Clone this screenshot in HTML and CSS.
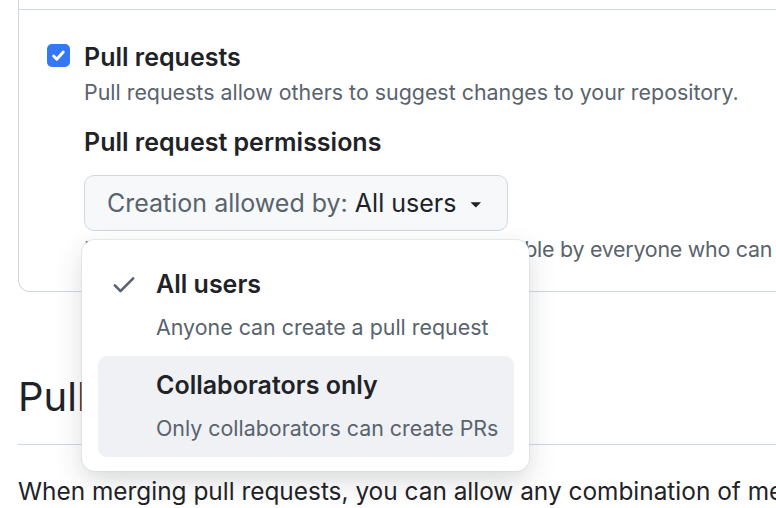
FILE: index.html
```html
<!DOCTYPE html>
<html lang="en">

<head>
    <meta charset="UTF-8">
    <meta name="viewport" content="width=device-width, initial-scale=1.0">
    <title>Settings · General</title>
    <link rel="stylesheet" href="styles.css">
</head>

<body>
    <div class="page">
        <div class="settings-box">
            <div class="settings-row">
                <!-- Checkbox ligado -->
                <span class="checkbox">
                    <svg viewBox="0 0 16 16" width="17" height="17" aria-hidden="true">
                        <path d="M3.4 8.5l3 3 6.1-6.8" fill="none" stroke="#fff" stroke-width="2.7" stroke-linecap="round" stroke-linejoin="round" />
                    </svg>
                </span>
                <div class="row-body">
                    <div class="row-label">Pull requests</div>
                    <p class="note">Pull requests allow others to suggest changes to your repository.</p>
                    <div class="sub-label">Pull request permissions</div>

                    <div class="menu-anchor">
                        <button type="button" class="select-button">
                            <span class="select-prefix">Creation allowed by:</span>
                            <span class="select-value">All users</span>
                            <svg class="caret" viewBox="0 0 16 16" width="25" height="25" aria-hidden="true">
                                <path d="m4.427 7.427 3.396 3.396a.25.25 0 0 0 .354 0l3.396-3.396A.25.25 0 0 0 11.396 7H4.604a.25.25 0 0 0-.177.427Z" />
                            </svg>
                        </button>
                        <p class="note note-tight">Keep in mind that pull requests remain viewable by everyone who can see this repository.</p>

                        <!-- Menu aberto -->
                        <ul class="select-menu">
                            <li class="menu-item">
                                <svg class="menu-check" viewBox="0 0 16 16" width="28" height="28" aria-hidden="true">
                                    <path d="M13.78 4.22a.75.75 0 0 1 0 1.06l-7.25 7.25a.75.75 0 0 1-1.06 0L2.22 9.28a.751.751 0 0 1 .018-1.042.751.751 0 0 1 1.042-.018L6 10.94l6.72-6.72a.75.75 0 0 1 1.06 0Z" />
                                </svg>
                                <span class="item-title">All users</span>
                                <span class="item-desc">Anyone can create a pull request</span>
                            </li>
                            <li class="menu-item active">
                                <span class="item-title">Collaborators only</span>
                                <span class="item-desc">Only collaborators can create PRs</span>
                            </li>
                        </ul>
                    </div>
                </div>
            </div>
        </div>

        <h2 class="section-title">Pull Requests</h2>
        <p class="section-text">When merging pull requests, you can allow any combination of merge commits, squashing, or rebasing.</p>
    </div>
</body>

</html>
```

FILE: styles.css
```css
html,
body {
    overflow: hidden;
}

body {
    margin: 0;
    background-color: #ffffff;
    color: #1f2328;
    font-family: Inter, "Noto Sans", sans-serif;
}

.page {
    width: 1100px;
    padding-left: 18px;
}

/* Caixa de configurações */
.settings-box {
    border: 1px solid #d1d9e0;
    border-top: 0;
    border-radius: 0 0 0 12px;
    padding-top: 9px;
}

.settings-row {
    display: flex;
    align-items: flex-start;
    gap: 14px;
    border-top: 1px solid #d1d9e0;
    padding: 30px 28px 27px;
}

.checkbox {
    flex: none;
    display: flex;
    align-items: center;
    justify-content: center;
    width: 23px;
    height: 23px;
    margin-top: 4px;
    border-radius: 5px;
    background-color: #3478f6;
}

.row-body {
    display: flex;
    flex-direction: column;
    align-items: flex-start;
}

.row-label,
.sub-label {
    font-size: 25px;
    font-weight: 600;
    line-height: 34px;
}

.note {
    margin: 3px 0 0;
    font-size: 21.4px;
    line-height: 30px;
    color: #59636e;
    white-space: nowrap;
}

.note-tight {
    letter-spacing: -0.25px;
}

.sub-label {
    margin-top: 18px;
}

.menu-anchor {
    position: relative;
    margin-top: 16px;
}

.select-button {
    display: flex;
    align-items: center;
    gap: 7px;
    width: 424px;
    height: 56px;
    padding: 0 20px 0 22px;
    border: 1px solid #d1d9e0;
    border-radius: 10px;
    background-color: #f6f8fa;
    font-family: inherit;
    font-size: 25px;
    color: #1f2328;
    white-space: nowrap;
    cursor: pointer;
}

.select-prefix {
    color: #59636e;
}

.caret {
    margin-left: 2px;
    fill: #1f2328;
}

/* Dropdown por cima do conteúdo */
.select-menu {
    position: absolute;
    top: 65px;
    left: -2px;
    width: 447px;
    box-sizing: border-box;
    margin: 0;
    padding: 15px 15px 14px 16px;
    list-style: none;
    background-color: #ffffff;
    border-radius: 13px;
    box-shadow: 0 0 0 1px rgba(209, 217, 224, 0.5), 0 10px 20px -5px rgba(37, 41, 46, 0.05), 0 10px 30px rgba(37, 41, 46, 0.14);
}

.menu-item {
    position: relative;
    display: flex;
    flex-direction: column;
    height: 101px;
    box-sizing: border-box;
    padding: 12px 0 0 58px;
    border-radius: 9px;
}

.menu-item.active {
    background-color: #eff1f4;
}

.menu-check {
    position: absolute;
    top: 15px;
    left: 12px;
    fill: #59636e;
}

.item-title {
    font-size: 25px;
    font-weight: 600;
    line-height: 34px;
}

.item-desc {
    margin-top: 11px;
    font-size: 21.4px;
    line-height: 30px;
    color: #59636e;
}

.section-title {
    margin: 80px 0 0;
    padding-bottom: 22px;
    border-bottom: 1px solid #d1d9e0;
    font-size: 40px;
    font-weight: 400;
    line-height: 50px;
}

.section-text {
    margin: 28px 0 0;
    font-size: 24.4px;
    line-height: 36px;
    white-space: nowrap;
}
```
